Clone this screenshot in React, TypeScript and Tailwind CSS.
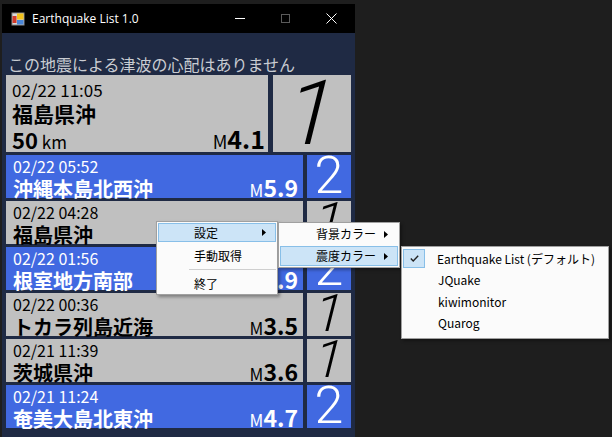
import React from "react";

type Quake = {
    time: string;
    place: string;
    mag: string;
    shindo: string;
    blue: boolean;
};

const quakes: Quake[] = [
    { time: "02/22 05:52", place: "沖縄本島北西沖", mag: "5.9", shindo: "2", blue: true },
    { time: "02/22 04:28", place: "福島県沖", mag: "3.9", shindo: "1", blue: false },
    { time: "02/22 01:56", place: "根室地方南部", mag: "4.9", shindo: "2", blue: true },
    { time: "02/22 00:36", place: "トカラ列島近海", mag: "3.5", shindo: "1", blue: false },
    { time: "02/21 11:39", place: "茨城県沖", mag: "3.6", shindo: "1", blue: false },
    { time: "02/21 11:24", place: "奄美大島北東沖", mag: "4.7", shindo: "2", blue: true },
];

const jp = { fontFamily: '"Noto Sans CJK JP", "Noto Sans", sans-serif' };
const digitFont = { fontFamily: 'Roboto, "Open Sans", sans-serif' };

function AppIcon() {
    return (
        <svg width="14" height="14" viewBox="0 0 14 14">
            <rect x="0.5" y="0.5" width="13" height="13" fill="#8a8a8a" />
            <rect x="1.5" y="1.5" width="11" height="11" fill="#d8d8d8" />
            <rect x="1.5" y="4" width="4" height="7" fill="#d23a2a" />
            <rect x="6" y="1.5" width="6.5" height="6" fill="#f2c21b" />
            <rect x="6" y="8" width="6.5" height="4.5" fill="#4a86d8" />
        </svg>
    );
}

function Arrow() {
    return (
        <svg width="4" height="7" viewBox="0 0 4 7" className="ml-auto block">
            <path d="M0 0 L4 3.5 L0 7 Z" fill="#000" />
        </svg>
    );
}

function Row({ q }: { q: Quake }) {
    const bg = q.blue ? "bg-[#4169e1] text-white" : "bg-[#c0c0c0] text-black";
    return (
        <div className="flex h-[43px] gap-[4px]">
            <div className={`flex w-[297px] flex-col pl-[7px] pr-[5px] ${bg}`}>
                <div className="mt-[2px] text-[16px] leading-[19px]">{q.time}</div>
                <div className="flex items-baseline justify-between">
                    <span className="text-[20px] font-bold leading-[22px]">{q.place}</span>
                    <span className="leading-[22px]">
                        <span className="text-[17px]">M</span>
                        <span className="text-[23px] font-bold">{q.mag}</span>
                    </span>
                </div>
            </div>
            <div className={`flex w-[44px] items-start justify-center ${bg}`} style={digitFont}>
                <span
                    className={`mt-[-4px] text-[52px] font-light leading-[50px] ${q.shindo === "1" ? "-skew-x-[14deg]" : ""}`}>
                    {q.shindo}
                </span>
            </div>
        </div>
    );
}

export default function App() {
    return (
        <div className="relative h-[437px] w-[612px] overflow-hidden bg-[#1e1e1e] pl-[2px] pt-[4px]" style={jp}>

            {/* window */}
            <div className="flex w-[353px] flex-col">
                <div className="flex h-[29px] items-center bg-black pl-[9px] text-white">
                    <AppIcon />
                    <span className="ml-[7px] text-[12px]" style={{ fontFamily: '"Open Sans", "Noto Sans", sans-serif' }}>
                        Earthquake List 1.0
                    </span>
                    <div className="ml-auto flex items-center">
                        <span className="mr-[36px] h-px w-[10px] bg-white" />
                        <span className="mr-[36px] h-[9px] w-[9px] border border-[#5a5a5a]" />
                        <svg width="11" height="11" viewBox="0 0 11 11" className="mr-[18px]">
                            <path d="M0.5 0.5 L10.5 10.5 M10.5 0.5 L0.5 10.5" stroke="white" strokeWidth="1" />
                        </svg>
                    </div>
                </div>

                <div className="flex h-[404px] flex-col bg-[#1f2a44] px-[4px]">
                    <div className="flex h-[42px] items-end pb-[1px] pl-[2px] text-[16px] leading-[20px] text-[#c9ccd2]">
                        この地震による津波の心配はありません
                    </div>

                    <div className="flex flex-col gap-[3px]">
                        <div className="flex h-[77px] gap-[5px]">
                            <div className="flex w-[262px] flex-col bg-[#c0c0c0] pl-[6px] pr-[3px] text-black">
                                <div className="mt-[5px] text-[17px] leading-[20px]">02/22 11:05</div>
                                <div className="mt-[1px] text-[21px] font-bold leading-[24px]">福島県沖</div>
                                <div className="flex items-baseline justify-between leading-[26px]">
                                    <span>
                                        <span className="text-[22px] font-bold">50</span>
                                        <span className="text-[17px]"> km</span>
                                    </span>
                                    <span>
                                        <span className="text-[18px]">M</span>
                                        <span className="text-[25px] font-bold">4.1</span>
                                    </span>
                                </div>
                            </div>
                            <div className="flex w-[78px] items-start justify-center bg-[#c0c0c0] text-black" style={digitFont}>
                                <span className="-skew-x-[14deg] text-[90px] font-light leading-[77px]">1</span>
                            </div>
                        </div>

                        {quakes.map((q, i) => (
                            <Row key={i} q={q} />
                        ))}
                    </div>
                </div>
            </div>

            {/* context menu */}
            <div className="absolute left-[156px] top-[221px] flex h-[74px] w-[122px] flex-col border border-[#a0a0a0] bg-[#fbfbfb] p-[1px] text-[12px] text-black shadow-[2px_2px_3px_rgba(0,0,0,0.35)]">
                <div className="flex h-[19px] items-center border border-[#88bfe8] bg-[#cce4f7] pl-[35px] pr-[9px]">
                    <span>設定</span>
                    <Arrow />
                </div>
                <div className="mt-[4px] flex h-[20px] items-center pl-[36px]">手動取得</div>
                <div className="ml-[31px] mt-[4px] h-px bg-[#cfcfcf]" />
                <div className="mt-[4px] flex h-[20px] items-center pl-[36px]">終了</div>
            </div>

            <div className="absolute left-[278px] top-[222px] flex h-[46px] w-[122px] flex-col border border-[#a0a0a0] bg-[#fbfbfb] p-[1px] text-[12px] text-black shadow-[2px_2px_3px_rgba(0,0,0,0.35)]">
                <div className="flex h-[20px] items-center pl-[36px] pr-[10px]">
                    <span>背景カラー</span>
                    <Arrow />
                </div>
                <div className="mt-[2px] flex h-[20px] items-center border border-[#88bfe8] bg-[#cce4f7] pl-[35px] pr-[9px]">
                    <span>震度カラー</span>
                    <Arrow />
                </div>
            </div>

            <div className="absolute left-[401px] top-[246px] flex h-[93px] w-[208px] flex-col border border-[#a0a0a0] bg-[#fbfbfb] p-[1px] text-[12px] text-black shadow-[2px_2px_3px_rgba(0,0,0,0.35)]">
                <div className="flex h-[21px] items-center">
                    <span className="flex h-[19px] w-[22px] items-center justify-center border border-[#88bfe8] bg-[#cce4f7]">
                        <svg width="9" height="7" viewBox="0 0 9 7">
                            <path d="M0.8 3.6 L3.2 6 L8.2 0.8" fill="none" stroke="#222" strokeWidth="1.4" />
                        </svg>
                    </span>
                    <span className="ml-[12px]">Earthquake List (デフォルト)</span>
                </div>
                <div className="flex h-[22px] items-center pl-[35px]">JQuake</div>
                <div className="flex h-[21px] items-center pl-[35px]">kiwimonitor</div>
                <div className="flex h-[22px] items-center pl-[35px]">Quarog</div>
            </div>
        </div>
    );
}
